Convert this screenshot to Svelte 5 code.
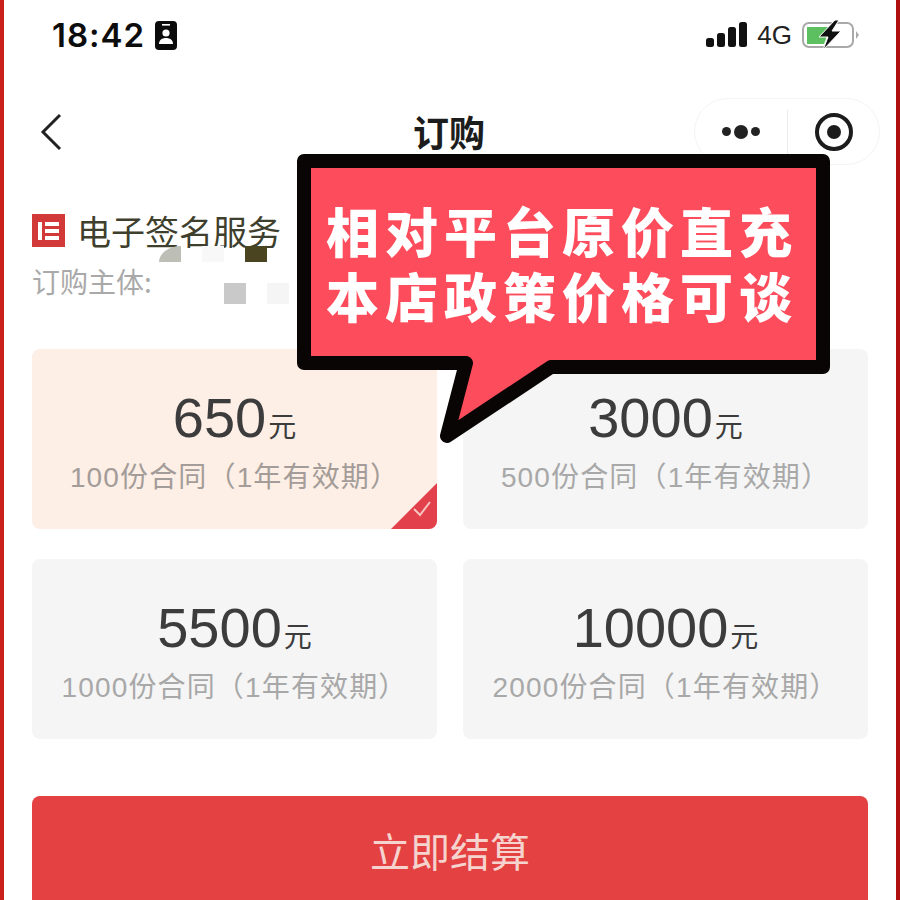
<script>
  // Order page: plan grid, with a promo speech bubble laid over the top.
  const plans = [
    { price: "650", note: "100份合同（1年有效期）", active: true },
    { price: "3000", note: "500份合同（1年有效期）" },
    { price: "5500", note: "1000份合同（1年有效期）" },
    { price: "10000", note: "2000份合同（1年有效期）" },
  ];
</script>

<div class="page">
  <header class="status">
    <div class="clock">
      <span>18:42</span>
      <svg width="22" height="29" viewBox="0 0 22 29" aria-hidden="true">
        <rect width="22" height="29" rx="4" fill="#0b0b0b" />
        <rect x="7" y="3" width="8" height="1.6" fill="#fff" />
        <circle cx="11" cy="12" r="3.6" fill="#fff" />
        <path d="M4 23c0-4 3-6 7-6s7 2 7 6z" fill="#fff" />
      </svg>
    </div>
    <div class="signal">
      <svg class="bars" width="41" height="25" viewBox="0 0 41 25" aria-hidden="true">
        <rect x="0" y="16" width="8" height="9" rx="2.5" fill="#111" />
        <rect x="11" y="11" width="8" height="14" rx="2.5" fill="#111" />
        <rect x="22" y="5" width="8" height="20" rx="2.5" fill="#111" />
        <rect x="33" y="0" width="8" height="25" rx="2.5" fill="#111" />
      </svg>
      <span class="net">4G</span>
      <svg width="58" height="30" viewBox="0 0 58 30" aria-hidden="true">
        <rect x="1" y="3" width="50" height="24" rx="6" fill="none" stroke="#a9a9a9" stroke-width="2" />
        <path d="M5 7h21l-6 9h5l-3 8H5z" fill="#5cc060" />
        <path d="M54 11l3 4-3 4z" fill="#a9a9a9" />
        <path d="M33 0L17 17h9l-5 13 18-19h-9l7-11z" fill="#111" stroke="#fff" stroke-width="1" />
      </svg>
    </div>
  </header>

  <nav class="nav">
    <svg class="back" width="22" height="38" viewBox="0 0 22 38" aria-hidden="true">
      <path d="M20 2L3 19l17 17" fill="none" stroke="#222" stroke-width="3" />
    </svg>
    <h1>订购</h1>
    <div class="capsule">
      <div class="dots"><i></i><i class="big"></i><i></i></div>
      <div class="target"><span></span></div>
    </div>
  </nav>

  <section class="service">
    <div class="name">
      <svg width="33" height="33" viewBox="0 0 33 33" aria-hidden="true">
        <rect width="33" height="33" fill="#d23a3a" />
        <rect x="6" y="8" width="4" height="18" fill="#fff" />
        <rect x="13" y="8" width="14" height="4" fill="#fff" />
        <rect x="13" y="15" width="14" height="4" fill="#fff" />
        <rect x="13" y="22" width="14" height="4" fill="#fff" />
      </svg>
      <span>电子签名服务</span>
    </div>
    <div class="buyer">订购主体:</div>
    <!-- mosaic blocks over the blurred company name -->
    <i class="px a"></i><i class="px b"></i><i class="px c"></i><i class="px d"></i><i class="px e"></i>
  </section>

  <section class="plans">
    {#each plans as plan}
      <div class="plan" class:active={plan.active}>
        <div class="price">{plan.price}<small>元</small></div>
        <div class="note">{plan.note}</div>
        {#if plan.active}
          <svg class="tick" width="46" height="46" viewBox="0 0 46 46" aria-hidden="true">
            <path d="M46 0V38a8 8 0 0 1-8 8H0z" fill="#e2404a" />
            <path d="M25 28l6 6 10-13" transform="translate(-2 -2)" fill="none" stroke="#f8c5c0" stroke-width="2" />
          </svg>
        {/if}
      </div>
    {/each}
  </section>

  <button class="pay">立即结算</button>

  <aside class="promo">
    <svg width="560" height="310" viewBox="0 0 560 310" aria-hidden="true">
      <path
        d="M14 16H533V222H261L157 291L176 218H14Z"
        fill="#fd4c5b"
        stroke="#0a0505"
        stroke-width="14"
        stroke-linejoin="round"
      />
    </svg>
    <p>相对平台原价直充<br />本店政策价格可谈</p>
  </aside>
</div>

<style>
  :global(body) {
    background: #fff;
  }
  .page {
    position: relative;
    box-sizing: border-box;
    width: 900px;
    height: 900px;
    overflow: hidden;
    border-left: 4px solid #cb1f1c;
    border-right: 4px solid #b0100f;
    background: #fff;
    font-family: "Noto Sans CJK SC", "Liberation Sans", sans-serif;
  }
  .status {
    display: flex;
    justify-content: space-between;
    align-items: center;
    height: 70px;
    padding: 0 36px 0 48px;
  }
  .clock {
    display: flex;
    align-items: center;
    gap: 10px;
    font: 600 33px Inter, sans-serif;
    letter-spacing: 1px;
    color: #0c0c0c;
  }
  .signal {
    display: flex;
    align-items: center;
    gap: 10px;
  }
  .bars {
    margin-bottom: 1px;
  }
  .net {
    font: 400 26px "Liberation Sans", sans-serif;
    color: #222;
  }
  .nav {
    position: relative;
    display: flex;
    align-items: center;
    justify-content: center;
    height: 67px;
    margin: 28px 16px 0 0;
  }
  .back {
    position: absolute;
    left: 36px;
    top: 15px;
  }
  h1 {
    margin: 0 0 2px 14px;
    font-size: 36px;
    font-weight: 700;
    line-height: 1;
    color: #1c1c1c;
  }
  .capsule {
    position: absolute;
    right: 0;
    top: 0;
    box-sizing: border-box;
    display: flex;
    align-items: center;
    width: 186px;
    height: 67px;
    border: 1px solid #f4f4f4;
    border-radius: 34px;
  }
  .dots {
    display: flex;
    align-items: center;
    justify-content: center;
    gap: 3px;
    width: 92px;
    height: 44px;
    border-right: 1px solid #ececec;
  }
  .dots i {
    width: 9px;
    height: 9px;
    border-radius: 50%;
    background: #222;
  }
  .dots i.big {
    width: 14px;
    height: 14px;
  }
  .target {
    display: flex;
    align-items: center;
    justify-content: center;
    box-sizing: border-box;
    width: 38px;
    height: 38px;
    margin-left: 27px;
    border: 4px solid #1c1c1c;
    border-radius: 50%;
  }
  .target span {
    width: 14px;
    height: 14px;
    border-radius: 50%;
    background: #1c1c1c;
  }
  .service {
    position: relative;
    margin: 49px 0 0 28px;
    height: 135px;
  }
  .name {
    display: flex;
    align-items: center;
    gap: 12px;
    height: 33px;
    font-size: 34px;
    color: #3f3f2e;
  }
  .buyer {
    margin-top: 16px;
    font-size: 28px;
    line-height: 36px;
    color: #a9a9a9;
  }
  .px {
    position: absolute;
    width: 22px;
    height: 21px;
  }
  .px.a {
    left: 127px;
    top: 32px;
    height: 16px;
    background: #bdbfb6;
    border-top-left-radius: 22px 16px;
  }
  .px.b {
    left: 170px;
    top: 32px;
    height: 16px;
    background: #f8f8f8;
  }
  .px.c {
    left: 213px;
    top: 32px;
    height: 16px;
    background: #4a4520;
  }
  .px.d {
    left: 192px;
    top: 69px;
    background: #c9c9c9;
  }
  .px.e {
    left: 235px;
    top: 69px;
    background: #f5f5f5;
  }
  .plans {
    display: grid;
    grid-template-columns: 405px 405px;
    grid-auto-rows: 180px;
    column-gap: 26px;
    row-gap: 30px;
    margin-left: 28px;
  }
  .plan {
    position: relative;
    display: flex;
    flex-direction: column;
    align-items: center;
    padding-top: 35px;
    border-radius: 8px;
    background: #f5f5f5;
  }
  .plan.active {
    background: #fdeee6;
  }
  .price {
    font: 400 56px/68px "Liberation Sans", sans-serif;
    color: #3c3c3c;
  }
  .price small {
    margin-left: 2px;
    font-family: "Noto Sans CJK SC", sans-serif;
    font-size: 28px;
  }
  .note {
    margin-top: 0;
    font: 400 28px/38px "Liberation Sans", "Noto Sans CJK SC", sans-serif;
    letter-spacing: 1.15px;
    color: #a8a8a8;
  }
  .active .note {
    color: #a39c98;
  }
  .tick {
    position: absolute;
    right: 0;
    bottom: 0;
  }
  .pay {
    display: block;
    box-sizing: border-box;
    width: 836px;
    height: 130px;
    margin: 57px 0 0 28px;
    padding: 0 0 22px;
    border: 0;
    border-radius: 8px;
    background: #e44143;
    color: #f5d3ce;
    font-family: inherit;
    font-size: 40px;
    letter-spacing: 0;
    text-align: center;
  }
  .promo {
    position: absolute;
    left: 286px;
    top: 145px;
    width: 560px;
    height: 310px;
  }
  .promo svg {
    display: block;
  }
  .promo p {
    position: absolute;
    left: 36px;
    top: 53px;
    margin: 0;
    font-size: 53px;
    font-weight: 900;
    line-height: 65px;
    letter-spacing: 6px;
    white-space: nowrap;
    color: #fff;
  }
</style>
